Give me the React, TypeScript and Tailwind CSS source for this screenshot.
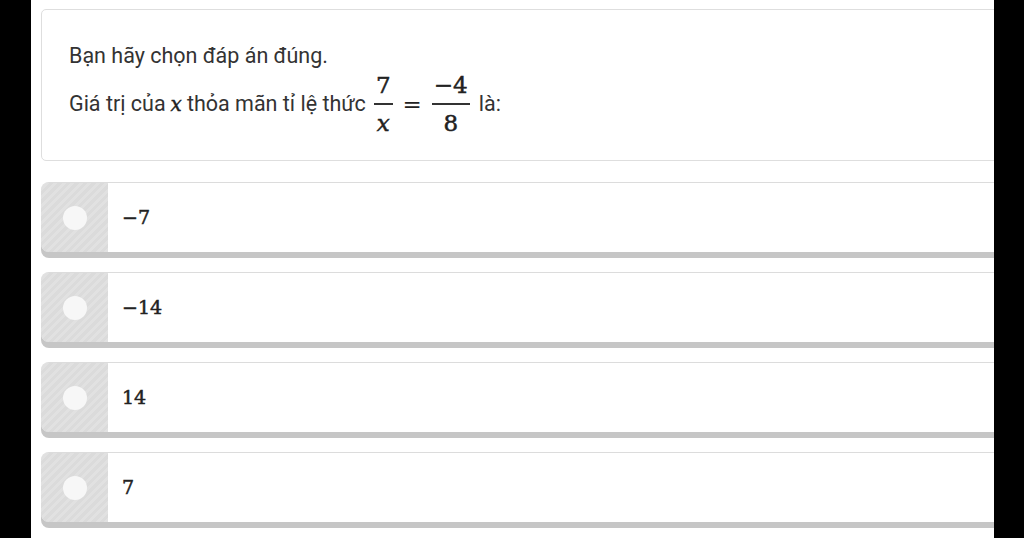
const options = ['−7', '−14', '14', '7'];

const Frac = ({ num, den }: { num: React.ReactNode; den: React.ReactNode }) => (
  <span className="mx-[8px] inline-flex flex-col items-center align-middle font-['DejaVu_Serif',serif] text-[23px] leading-none text-[#222] [-webkit-text-stroke:0.5px_#222]">
    <span className="px-[2px] pb-[6px]">{num}</span>
    <span className="h-[1.5px] w-full bg-[#333]" />
    <span className="px-[2px] pt-[7px]">{den}</span>
  </span>
);

const Option = ({ label }: { label: string }) => (
  <div className="mb-[6px] flex h-[70px] overflow-hidden rounded-l-[8px] border-t border-[#dcdcdc] shadow-[0_6px_0_#c6c6c6]">
    <div className="flex w-[67px] shrink-0 items-center justify-center bg-[#dcdcdc] bg-[repeating-linear-gradient(135deg,#dbdbdb_0px,#dbdbdb_3px,#e1e1e1_3px,#e1e1e1_6px)] shadow-[0_6px_0_#aaaaaa]">
      <div className="h-[24px] w-[24px] rounded-full bg-[#f7f7f7]" />
    </div>
    <div className="flex flex-1 items-center bg-white pl-[14px] font-['DejaVu_Serif',serif] text-[19px] text-[#222] [-webkit-text-stroke:0.5px_#222]">
      {label}
    </div>
  </div>
);

export default function App() {
  return (
    <div className="flex h-[538px] w-[1024px] overflow-hidden bg-black">
      <div className="w-[31px] shrink-0 bg-black" />
      <div className="flex-1 overflow-hidden bg-white pl-[10px] pt-[9px]">
        <div className="-mr-4 h-[152px] rounded-[5px] border border-[#dedede] pl-[27px] pt-[31px] font-['Roboto',sans-serif] text-[21.5px] text-[#333]">
          <p className="leading-[30px]">Bạn hãy chọn đáp án đúng.</p>
          <p className="mt-[3px] flex items-center">
            <span>Giá trị của </span>
            <span className="mx-[5px] font-['DejaVu_Serif',serif] text-[20px] italic text-[#222] [-webkit-text-stroke:0.4px_#222]">x</span>
            <span>thỏa mãn tỉ lệ thức</span>
            <Frac num="7" den={<span className="italic">x</span>} />
            <span className="mx-[2px] font-['DejaVu_Serif',serif] text-[23px] text-[#222]">=</span>
            <Frac num="−4" den="8" />
            <span className="ml-[1px]">là:</span>
          </p>
        </div>
        <div className="-mr-4 mt-[21px] flex flex-col gap-[14px]">
          {options.map((o) => (
            <Option key={o} label={o} />
          ))}
        </div>
      </div>
      <div className="w-[30px] shrink-0 bg-black" />
    </div>
  );
}
